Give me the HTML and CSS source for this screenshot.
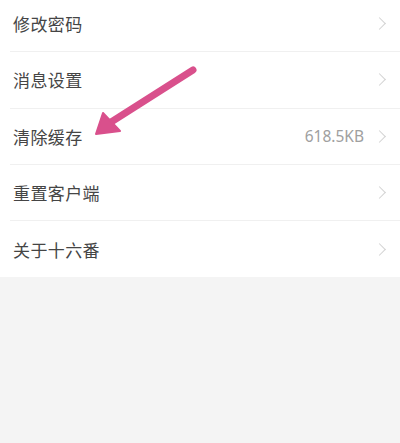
FILE: index.html
```html
<!DOCTYPE html>
<html lang="zh">
<head>
<meta charset="utf-8">
<link rel="stylesheet" href="styles.css">
</head>
<body>
<div class="page">
  <ul class="list">
    <li class="row"><span class="label">修改密码</span><span class="right"><span class="chev"></span></span></li>
    <li class="row"><span class="label">消息设置</span><span class="right"><span class="chev"></span></span></li>
    <li class="row"><span class="label">清除缓存</span><span class="right"><span class="value">618.5KB</span><span class="chev"></span></span></li>
    <li class="row"><span class="label">重置客户端</span><span class="right"><span class="chev"></span></span></li>
    <li class="row last"><span class="label">关于十六番</span><span class="right"><span class="chev"></span></span></li>
  </ul>
  <div class="rest"></div>
  <svg class="arrow" width="400" height="443" viewBox="0 0 400 443">
    <line x1="193" y1="70" x2="108" y2="124" stroke="#d9508c" stroke-width="7" stroke-linecap="round"/>
    <polygon points="96,134 103,113 120,131" fill="#d9508c" stroke="#d9508c" stroke-width="2" stroke-linejoin="round"/>
  </svg>
</div>
</body>
</html>
```
FILE: styles.css
```css
html, body {
  margin: 0;
  padding: 0;
  background: #f4f4f4;
}
.page {
  position: relative;
  width: 400px;
  height: 443px;
  overflow: hidden;
  font-family: "Noto Sans CJK SC", "Noto Sans", sans-serif;
}
.list {
  list-style: none;
  margin: -4px 0 0 0;
  padding: 0;
  background: #ffffff;
}
.row {
  display: flex;
  align-items: center;
  justify-content: space-between;
  height: 55.25px;
  margin-left: 10px;
  padding: 0 14px 0 3px;
  border-bottom: 1px solid #f0f0f0;
}
.row.last {
  border-bottom: none;
  height: 56.25px;
}
.label {
  font-size: 17px;
  color: #454545;
  letter-spacing: 0.4px;
}
.right {
  display: flex;
  align-items: center;
  gap: 11px;
}
.value {
  font-size: 15.5px;
  color: #a0a0a0;
  font-family: "Noto Sans", sans-serif;
}
.chev {
  display: inline-block;
  width: 8px;
  height: 8px;
  border-top: 1.5px solid #d2d2d2;
  border-right: 1.5px solid #d2d2d2;
  transform: rotate(45deg);
  margin-right: 2px;
}
.rest {
  height: 170px;
}
.arrow {
  position: absolute;
  left: 0;
  top: 0;
}
```
